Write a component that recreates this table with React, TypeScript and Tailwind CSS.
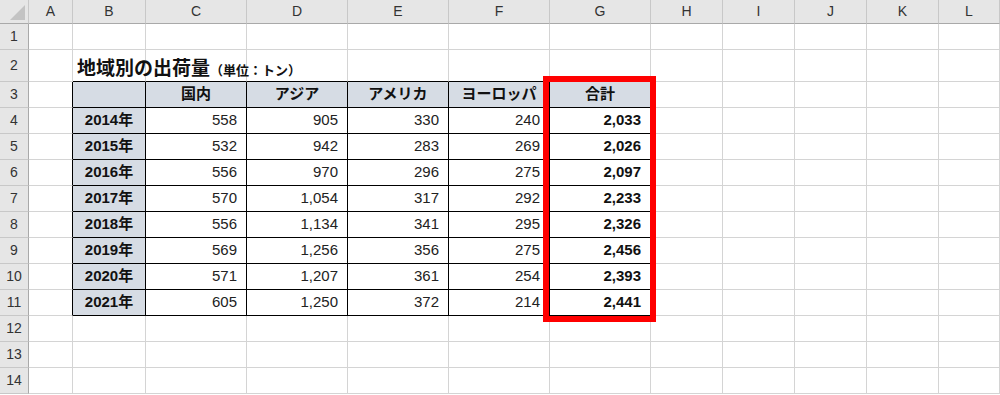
import React from 'react';

const cols = ['A', 'B', 'C', 'D', 'E', 'F', 'G', 'H', 'I', 'J', 'K', 'L'];
const rowHeights = [26, 32, 26, 26, 26, 26, 26, 26, 26, 26, 26, 26, 26, 26];

const heads = ['国内', 'アジア', 'アメリカ', 'ヨーロッパ', '合計'];
const data: [string, number[]][] = [
    ['2014年', [558, 905, 330, 240, 2033]],
    ['2015年', [532, 942, 283, 269, 2026]],
    ['2016年', [556, 970, 296, 275, 2097]],
    ['2017年', [570, 1054, 317, 292, 2233]],
    ['2018年', [556, 1134, 341, 295, 2326]],
    ['2019年', [569, 1256, 356, 275, 2456]],
    ['2020年', [571, 1207, 361, 254, 2393]],
    ['2021年', [605, 1250, 372, 214, 2441]],
];

const font = { fontFamily: '"Liberation Sans", "Noto Sans CJK JP", sans-serif' };

// table spans B3:G11 -> col index 1..6, row index 2..10 (0-based)
const inTable = (r: number, c: number) => r >= 2 && r <= 10 && c >= 1 && c <= 6;

function Cell({ r, c }: { r: number; c: number }) {
    const rightBlack = inTable(r, c) || inTable(r, c + 1);
    const bottomBlack = inTable(r, c) || inTable(r + 1, c);
    const border = `${rightBlack ? 'border-r-black' : 'border-r-[#d4d4d4]'} ${bottomBlack ? 'border-b-black' : 'border-b-[#d4d4d4]'}`;

    let content: React.ReactNode = null;
    let cls = '';

    if (r === 1 && c === 1) {
        content = (
            <div className="absolute left-[4px] bottom-[5px] whitespace-nowrap flex items-baseline text-[#111]" style={{ fontFamily: '"Noto Sans CJK JP", sans-serif' }}>
                <span className="text-[19px] font-bold leading-none">地域別の出荷量</span>
                <span className="text-[13px] font-bold leading-none">（単位：トン）</span>
            </div>
        );
        cls = 'relative overflow-visible z-10';
    } else if (inTable(r, c)) {
        if (r === 2) {
            cls = 'bg-[#d6dce4] justify-center font-bold text-[15px] text-[#111]';
            content = c === 1 ? null : heads[c - 2];
        } else {
            const [year, vals] = data[r - 3];
            if (c === 1) {
                cls = 'bg-[#d6dce4] justify-center font-bold text-[15px] text-[#111]';
                content = year;
            } else {
                const v = vals[c - 2];
                cls = `bg-white justify-end pr-[9px] text-[15px] ${c === 6 ? 'font-bold text-[#111]' : 'text-[#222]'}`;
                content = v.toLocaleString('en-US');
            }
        }
    }

    return (
        <div className={`flex items-center border-r border-b ${border} ${cls}`} style={font}>
            {content}
        </div>
    );
}

export default function App() {
    return (
        <div className="relative w-[1000px] h-[395px] overflow-hidden bg-white" style={font}>
            <div
                className="grid grid-cols-[29px_44px_73px_101px_101px_101px_101px_101px_72px_72px_72px_72px_1fr]"
                style={{ gridTemplateRows: `24px ${rowHeights.map((h) => h + 'px').join(' ')}` }}
            >
                {/* corner */}
                <div className="relative bg-[#e6e6e6] border-r border-b border-r-[#c8c8c8] border-b-[#a9a9a9]">
                    <svg className="absolute right-[3px] bottom-[3px]" width="15" height="15" viewBox="0 0 15 15">
                        <polygon points="15,0 15,15 0,15" fill="#c3c3c3" />
                    </svg>
                </div>
                {cols.map((c) => (
                    <div key={c} className="flex items-center justify-center bg-[#e6e6e6] border-r border-b border-r-[#c8c8c8] border-b-[#a9a9a9] text-[14px] text-[#333]">
                        {c}
                    </div>
                ))}
                {rowHeights.map((_, r) => (
                    <React.Fragment key={r}>
                        <div className="flex items-center justify-center bg-[#e6e6e6] border-r border-b border-r-[#a9a9a9] border-b-[#c8c8c8] text-[14px] text-[#333]">
                            {r + 1}
                        </div>
                        {cols.map((_, c) => (
                            <Cell key={c} r={r} c={c} />
                        ))}
                    </React.Fragment>
                ))}
            </div>
            {/* selection highlight around G3:G11 */}
            <div className="absolute left-[543px] top-[76px] w-[113px] h-[246px] border-[6px] border-[#ff0000] pointer-events-none" />
        </div>
    );
}
